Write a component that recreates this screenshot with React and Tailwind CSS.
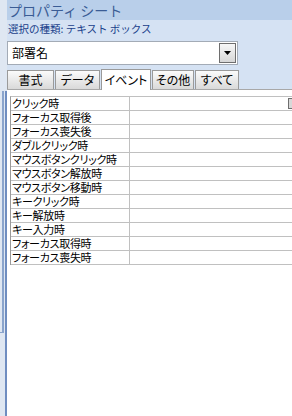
import React from "react";

const rows = [
  "クリック時",
  "フォーカス取得後",
  "フォーカス喪失後",
  "ダブルクリック時",
  "マウスボタンクリック時",
  "マウスボタン解放時",
  "マウスボタン移動時",
  "キークリック時",
  "キー解放時",
  "キー入力時",
  "フォーカス取得時",
  "フォーカス喪失時",
];

const tabs = [
  { label: "書式", w: "w-[47px]", active: false },
  { label: "データ", w: "w-[45px]", active: false },
  { label: "イベント", w: "w-[50px]", active: true },
  { label: "その他", w: "w-[42px]", active: false },
  { label: "すべて", w: "w-[44px]", active: false },
];

export default function App() {
  return (
    <div className="w-[292px] h-[416px] flex overflow-hidden bg-[#d5e2f3] font-['Noto_Sans_CJK_JP',sans-serif]">
      {/* left strip */}
      <div className="w-[7px] shrink-0 flex flex-col bg-[#dfe7f2]">
        <div className="h-[91px] shrink-0" />
        <div className="flex-1 flex">
          <div className="w-[4px] h-[242px] border-r-2 border-b border-[#8aa4cc]" />
          <div className="w-px" />
          <div className="w-[2px] bg-[#6f8dc0]" />
        </div>
      </div>

      {/* main */}
      <div className="flex-1 flex flex-col min-w-0">
        <div className="h-[20px] shrink-0 bg-[#b9cfea] flex items-center pl-px text-[14px] leading-none text-[#3a5c95] whitespace-nowrap">
          プロパティ シート
        </div>
        <div className="h-[21px] shrink-0 pl-px pt-[2px] text-[10.5px] leading-[14px] text-[#1a3f8b] whitespace-nowrap">
          選択の種類: テキスト ボックス
        </div>

        {/* combo */}
        <div className="w-[231px] h-[24px] shrink-0 flex items-center bg-white border border-[#a3abb6]">
          <div className="flex-1 pl-[4px] text-[12px] leading-none text-black">部署名</div>
          <div className="w-[17px] h-[20px] mr-px flex items-center justify-center border border-[#6e6e6e] bg-gradient-to-b from-[#f7f7f7] to-[#d6d6d6]">
            <svg width="7" height="4" viewBox="0 0 7 4">
              <polygon points="0,0 7,0 3.5,4" fill="#000" />
            </svg>
          </div>
        </div>

        {/* tabs */}
        <div className="mt-[4px] h-[20px] shrink-0 flex items-end gap-px relative z-10 [font-feature-settings:'palt']">
          {tabs.map((t) =>
            t.active ? (
              <div
                key={t.label}
                className={`${t.w} h-[21px] -mb-px bg-white border border-b-0 border-[#9a9a9a] flex items-center justify-center text-[12px] leading-none text-black`}
              >
                {t.label}
              </div>
            ) : (
              <div
                key={t.label}
                className={`${t.w} h-[19px] border border-b-0 border-[#9a9a9a] bg-gradient-to-b from-[#fbfbfb] to-[#d9d9d9] flex items-center justify-center text-[12px] leading-none text-black`}
              >
                {t.label}
              </div>
            )
          )}
        </div>

        {/* panel */}
        <div className="flex-1 bg-white border-t border-[#a8a8a8] pt-[6px] pl-[3px] overflow-hidden">
          <div className="w-[300px] border-l border-t border-l-[#9a9a9a] border-t-[#c0c0c0] [font-feature-settings:'palt']">
            {rows.map((r, i) => (
              <div key={r} className="h-[14px] flex border-b border-[#c0c0c0]">
                <div className="w-[119px] shrink-0 border-r border-[#c0c0c0] pl-px text-[11px] leading-[13px] tracking-[-0.3px] text-black whitespace-nowrap overflow-hidden">
                  {r}
                </div>
                <div className="flex-1 flex items-start">
                  {i === 0 && (
                    <div className="ml-[158px] mt-px w-[10px] h-[11px] border border-[#6e6e6e] bg-[#d8d8d8]" />
                  )}
                </div>
              </div>
            ))}
          </div>
        </div>
      </div>
    </div>
  );
}
